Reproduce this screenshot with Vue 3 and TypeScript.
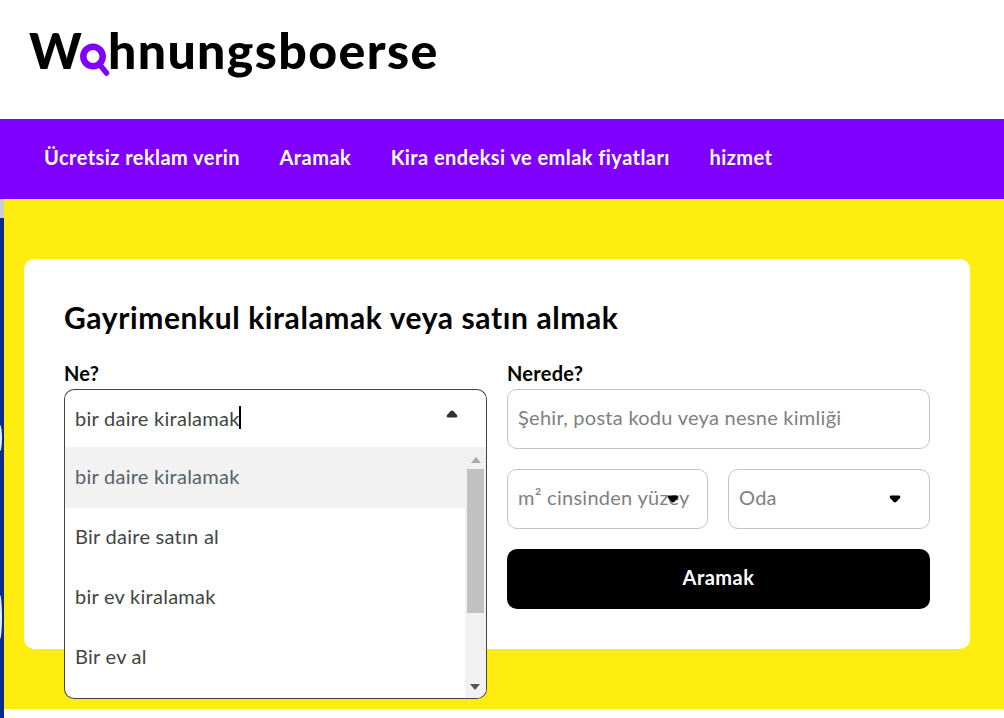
<template>
  <div class="page">
    <header class="brand">
      <div class="logo">
        <span>W</span>
        <svg class="logo-o" width="30" height="40" viewBox="0 0 30 40" aria-hidden="true">
          <circle cx="13" cy="16.5" r="9.7" fill="none" stroke="#8000ff" stroke-width="6.5" />
          <line x1="20" y1="25" x2="26.5" y2="33" stroke="#8000ff" stroke-width="5.5" stroke-linecap="round" />
        </svg>
        <span class="logo-rest">hnungsboerse</span>
      </div>
    </header>

    <nav class="menu">
      <a v-for="item in menuItems" :key="item">{{ item }}</a>
    </nav>

    <div class="body-row">
      <div class="stripe">
        <div class="stripe-top"></div>
        <div class="stripe-mark mark-one"></div>
        <div class="stripe-mark mark-two"></div>
      </div>
      <main class="hero">
        <section class="card">
          <h1>Gayrimenkul kiralamak veya satın almak</h1>
          <div class="columns">
            <div class="col">
              <label>Ne?</label>
              <div class="select-wrap">
                <div class="select-open">
                  <span class="value">bir daire kiralamak</span><span class="caret"></span>
                  <svg class="arrow" width="12" height="8" viewBox="0 0 12 8"><path d="M4.5 1.2Q6 0 7.5 1.2L11 5Q12 7.5 10 7.5H2Q0 7.5 1 5Z" fill="#333" /></svg>
                </div>
                <div class="dropdown">
                  <ul>
                    <li v-for="(opt, i) in options" :key="opt" :class="{ active: i === 0 }">{{ opt }}</li>
                  </ul>
                  <div class="scrollbar">
                    <svg class="sb-arrow" width="10" height="6" viewBox="0 0 10 6"><path d="M5 0 10 6H0Z" fill="#a8a8a8" /></svg>
                    <div class="thumb"></div>
                    <svg class="sb-arrow sb-down" width="10" height="6" viewBox="0 0 10 6"><path d="M0 0H10L5 6Z" fill="#555" /></svg>
                  </div>
                </div>
              </div>
            </div>

            <div class="col">
              <label>Nerede?</label>
              <div class="field">Şehir, posta kodu veya nesne kimliği</div>
              <div class="pair">
                <div class="field small">
                  m² cinsinden yüzey
                  <svg class="arrow down" width="12" height="8" viewBox="0 0 12 8"><path d="M4.5 6.8Q6 8 7.5 6.8L11 3Q12 .5 10 .5H2Q0 .5 1 3Z" fill="#000" /></svg>
                </div>
                <div class="field small">
                  Oda
                  <svg class="arrow down" width="12" height="8" viewBox="0 0 12 8"><path d="M4.5 6.8Q6 8 7.5 6.8L11 3Q12 .5 10 .5H2Q0 .5 1 3Z" fill="#000" /></svg>
                </div>
              </div>
              <button class="search">Aramak</button>
            </div>
          </div>
        </section>
      </main>
    </div>
  </div>
</template>

<script setup lang="ts">
const menuItems: string[] = [
  'Ücretsiz reklam verin',
  'Aramak',
  'Kira endeksi ve emlak fiyatları',
  'hizmet',
];

const options: string[] = [
  'bir daire kiralamak',
  'Bir daire satın al',
  'bir ev kiralamak',
  'Bir ev al',
];
</script>

<style>
html,
body {
  margin: 0;
  background: #fff;
  overflow: hidden;
}
</style>

<style scoped>
.page {
  width: 1004px;
  height: 718px;
  overflow: hidden;
  font-family: "Lato", "Noto Sans", sans-serif;
  color: #000;
}

.brand {
  height: 119px;
  padding: 24px 0 0 29px;
  box-sizing: border-box;
}

.logo {
  display: flex;
  align-items: flex-start;
  height: 52px;
  font-size: 50px;
  font-weight: 900;
  line-height: 52px;
}

.logo-o {
  flex: none;
  margin: 16px 0 0 -2px;
}

.logo-rest {
  margin-left: -2px;
  letter-spacing: 1.4px;
}

.menu {
  height: 80px;
  box-sizing: border-box;
  background: #8000ff;
  display: flex;
  align-items: center;
  gap: 39.5px;
  padding: 0 0 4px 44px;
}

.menu a {
  color: #fff;
  font-size: 20px;
  font-weight: 700;
  letter-spacing: 0.44px;
}

.body-row {
  display: flex;
  height: 519px;
}

.stripe {
  position: relative;
  width: 4px;
  flex: none;
  background: #0a2a8c;
}

.stripe-top {
  height: 19px;
  background: #c9ccd6;
}

.stripe-mark {
  position: absolute;
  left: -2px;
  width: 4px;
  background: #e6e8f2;
  border-radius: 50%;
}

.mark-one {
  top: 226px;
  height: 26px;
}

.mark-two {
  top: 396px;
  height: 44px;
}

.hero {
  flex: 1;
  height: 510px;
  background: #ffed10;
  padding: 60px 34px 60px 20px;
  box-sizing: border-box;
}

.card {
  height: 390px;
  background: #fff;
  border-radius: 10px;
  padding: 40px;
  box-sizing: border-box;
}

h1 {
  margin: 0 0 26px;
  font-size: 30px;
  line-height: 36px;
  font-weight: 700;
  letter-spacing: 0.6px;
}

.columns {
  display: grid;
  grid-template-columns: 423px 423px;
  gap: 20px;
}

label {
  display: block;
  font-size: 20px;
  line-height: 25px;
  font-weight: 700;
  letter-spacing: 0.25px;
  margin-bottom: 3px;
}

.select-wrap {
  position: relative;
  height: 60px;
}

.select-open {
  height: 60px;
  box-sizing: border-box;
  border: 1px solid #444;
  border-bottom: none;
  border-radius: 10px 10px 0 0;
  padding: 0 0 4px 10px;
  display: flex;
  align-items: center;
  font-size: 20px;
  color: #444;
  letter-spacing: 0.26px;
  position: relative;
}

.caret {
  display: inline-block;
  width: 2px;
  height: 23px;
  background: #000;
  margin-left: -1px;
}

.arrow {
  position: absolute;
  right: 28px;
  top: 20px;
}

.dropdown {
  position: absolute;
  left: 0;
  right: 0;
  top: 58px;
  height: 252px;
  box-sizing: border-box;
  background: #fff;
  border: 1px solid #444;
  border-top: none;
  border-radius: 0 0 10px 10px;
  overflow: hidden;
  display: flex;
}

ul {
  flex: 1;
  margin: 0;
  padding: 0;
  list-style: none;
}

li {
  height: 60px;
  box-sizing: border-box;
  display: flex;
  align-items: center;
  padding: 0 0 2px 10px;
  font-size: 20px;
  color: #444;
  letter-spacing: 0.26px;
}

li.active {
  background: #f2f2f2;
  box-shadow: 0 1px 0 #f2f2f2;
  color: #56626b;
}

.scrollbar {
  width: 21px;
  flex: none;
  background: #f1f1f1;
  display: flex;
  flex-direction: column;
  align-items: center;
  position: relative;
}

.sb-arrow {
  margin-top: 10px;
}

.thumb {
  width: 17px;
  height: 144px;
  margin-top: 6px;
  background: #c1c1c1;
}

.sb-down {
  position: absolute;
  bottom: 8px;
  left: 5px;
}

.col > .field {
  margin-bottom: 20px;
}

.field {
  height: 60px;
  box-sizing: border-box;
  border: 1px solid #c4c4c4;
  border-radius: 10px;
  padding: 0 0 4px 10px;
  display: flex;
  align-items: center;
  font-size: 20px;
  color: #808080;
  letter-spacing: 0.27px;
  position: relative;
  white-space: nowrap;
}

.pair {
  display: grid;
  grid-template-columns: 201px 202px;
  gap: 20px;
  margin-bottom: 20px;
}

.arrow.down {
  right: 28px;
  top: 25px;
}

.search {
  display: block;
  width: 100%;
  height: 60px;
  border: none;
  border-radius: 10px;
  padding: 0 0 4px;
  background: #000;
  color: #fff;
  font-family: inherit;
  font-size: 20px;
  font-weight: 700;
  letter-spacing: 0.5px;
}
</style>
